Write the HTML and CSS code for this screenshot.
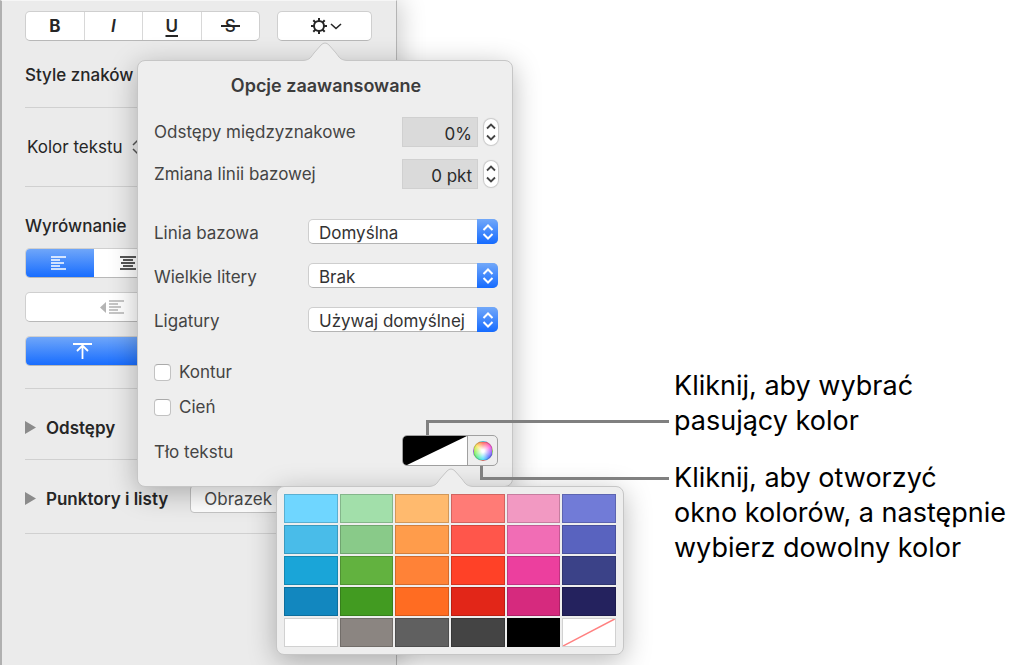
FILE: index.html
```html
<!DOCTYPE html>
<html lang="pl">
<head>
<meta charset="utf-8">
<title>Opcje zaawansowane</title>
<link rel="stylesheet" href="styles.css">
</head>
<body>
<main class="stage">
  <aside class="inspector">
    <div class="toolbar">
      <div class="segments">
        <button type="button" class="segment bold">B</button>
        <button type="button" class="segment italic">I</button>
        <button type="button" class="segment underline">U</button>
        <button type="button" class="segment strike" aria-label="S"><span>S</span></button>
      </div>
      <button type="button" class="gear" aria-label="Opcje zaawansowane">
        <svg width="30" height="18" viewBox="0 0 30 18" fill="none" stroke="#262626">
          <circle cx="9" cy="9" r="5" stroke-width="2"/>
          <path d="M9 1v3M9 14v3M1 9h3M14 9h3M3.3 3.3l2.2 2.2M12.5 12.5l2.2 2.2M3.3 14.7l2.2-2.2M12.5 5.5l2.2-2.2" stroke-width="2"/>
          <path d="M21 7l5 4.500 5-4.500" stroke-width="1.600"/>
        </svg>
      </button>
    </div>
    <section class="group styles"><h2>Style znaków</h2></section>
    <section class="group color">
      <span>Kolor tekstu</span>
      <svg width="10" height="16" viewBox="0 0 10 16" fill="none" stroke="#555" stroke-width="1.500"><path d="M1 6l4-4 4 4M1 10l4 4 4-4"/></svg>
    </section>
    <section class="group align">
      <h2>Wyrównanie</h2>
      <div class="segments wide">
        <button type="button" class="segment active" aria-label="Do lewej">
          <svg width="16" height="14" stroke="#fff" stroke-width="1.500"><path d="M0 1h15M0 4h9M0 7h13M0 10h9M0 13h15"/></svg>
        </button>
        <button type="button" class="segment" aria-label="Do środka">
          <svg width="16" height="14" stroke="#222" stroke-width="1.500"><path d="M0 1h16M3 4h10M1 7h14M3 10h10M0 13h16"/></svg>
        </button>
        <button type="button" class="segment" aria-label="Do prawej"></button>
        <button type="button" class="segment" aria-label="Wyjustuj"></button>
        <button type="button" class="segment" aria-label="Automatycznie"></button>
      </div>
      <div class="segments wide">
        <button type="button" class="segment" aria-label="Zmniejsz wcięcie">
          <svg width="24" height="15" fill="#b4b4b4" stroke="#b4b4b4" stroke-width="1.500"><path d="M6 2v11L0 7.500z" stroke="none"/><path d="M9 1h15M9 4h9M9 7h12M9 10h9M9 13h15"/></svg>
        </button>
        <button type="button" class="segment" aria-label="Zwiększ wcięcie"></button>
      </div>
      <div class="segments wide">
        <button type="button" class="segment active" aria-label="Do góry">
          <svg width="20" height="18" fill="none" stroke="#fff" stroke-width="1.800"><path d="M0 2h19M9.500 17V4M4 9l5.500-5.500L15 9"/></svg>
        </button>
        <button type="button" class="segment" aria-label="Do środka w pionie"></button>
        <button type="button" class="segment" aria-label="Do dołu"></button>
      </div>
    </section>
    <section class="group spacing">
      <svg class="disclosure" width="11" height="13" fill="#8b8b8b"><path d="M0 0l11 6.500L0 13z"/></svg>
      <h2>Odstępy</h2>
    </section>
    <section class="group bullets">
      <svg class="disclosure" width="11" height="13" fill="#8b8b8b"><path d="M0 0l11 6.500L0 13z"/></svg>
      <h2>Punktory i listy</h2>
      <button type="button" class="image-button">Obrazek</button>
    </section>
  </aside>

  <section class="popover advanced">
    <svg class="arrow" width="44" height="20" viewBox="0 0 44 20"><path class="fill" d="M0 20v-1.500C7 18 8 15 11 11L18 3Q22-1 26 3L33 11C36 15 37 18 44 18.500V20z"/><path class="edge" d="M0 18.500C7 18 8 15 11 11L18 3Q22-1 26 3L33 11C36 15 37 18 44 18.500"/></svg>
    <h1>Opcje zaawansowane</h1>
    <div class="numbers">
      <div class="row">
        <label for="tracking">Odstępy międzyznakowe</label>
        <input id="tracking" type="text" value="0%">
        <button type="button" class="stepper" aria-label="Zmień odstępy"><svg width="10" height="18" viewBox="0 0 10 18"><path d="M1 5.500l4-4 4 4M1 12.500l4 4 4-4"/></svg></button>
      </div>
      <div class="row">
        <label for="shift">Zmiana linii bazowej</label>
        <input id="shift" type="text" value="0 pkt">
        <button type="button" class="stepper" aria-label="Zmień linię"><svg width="10" height="18" viewBox="0 0 10 18"><path d="M1 5.500l4-4 4 4M1 12.500l4 4 4-4"/></svg></button>
      </div>
    </div>
    <div class="choices">
      <div class="row">
        <label for="baseline">Linia bazowa</label>
        <div class="picker"><select id="baseline"><option>Domyślna</option></select><span class="cap"><svg width="12" height="16" viewBox="0 0 12 16"><path d="M1.500 6L6 1.500 10.500 6M1.500 10L6 14.500 10.500 10"/></svg></span></div>
      </div>
      <div class="row">
        <label for="caps">Wielkie litery</label>
        <div class="picker"><select id="caps"><option>Brak</option></select><span class="cap"><svg width="12" height="16" viewBox="0 0 12 16"><path d="M1.500 6L6 1.500 10.500 6M1.500 10L6 14.500 10.500 10"/></svg></span></div>
      </div>
      <div class="row">
        <label for="ligatures">Ligatury</label>
        <div class="picker"><select id="ligatures"><option>Używaj domyślnej</option></select><span class="cap"><svg width="12" height="16" viewBox="0 0 12 16"><path d="M1.500 6L6 1.500 10.500 6M1.500 10L6 14.500 10.500 10"/></svg></span></div>
      </div>
    </div>
    <div class="checks">
      <label class="check"><input type="checkbox">Kontur</label>
      <label class="check"><input type="checkbox">Cień</label>
    </div>
    <div class="row background">
      <span>Tło tekstu</span>
      <div class="well">
        <button type="button" class="well-color" aria-label="Kolor tła"><svg width="100%" height="100%" viewBox="0 0 64 29" preserveAspectRatio="none"><path d="M0 0h64L4 29H0z"/></svg></button>
        <button type="button" class="well-wheel" aria-label="Okno kolorów"><span class="wheel"></span></button>
      </div>
    </div>
  </section>

  <section class="popover palette">
    <svg class="arrow" width="44" height="20" viewBox="0 0 44 20"><path class="fill" d="M0 20v-1.500C7 18 8 15 11 11L18 3Q22-1 26 3L33 11C36 15 37 18 44 18.500V20z"/><path class="edge" d="M0 18.500C7 18 8 15 11 11L18 3Q22-1 26 3L33 11C36 15 37 18 44 18.500"/></svg>
    <div class="swatches">
      <button type="button" class="swatch blue-1" aria-label="Niebieski 1"></button>
      <button type="button" class="swatch green-1" aria-label="Zielony 1"></button>
      <button type="button" class="swatch orange-1" aria-label="Pomarańczowy 1"></button>
      <button type="button" class="swatch red-1" aria-label="Czerwony 1"></button>
      <button type="button" class="swatch pink-1" aria-label="Różowy 1"></button>
      <button type="button" class="swatch violet-1" aria-label="Fioletowy 1"></button>
      <button type="button" class="swatch blue-2" aria-label="Niebieski 2"></button>
      <button type="button" class="swatch green-2" aria-label="Zielony 2"></button>
      <button type="button" class="swatch orange-2" aria-label="Pomarańczowy 2"></button>
      <button type="button" class="swatch red-2" aria-label="Czerwony 2"></button>
      <button type="button" class="swatch pink-2" aria-label="Różowy 2"></button>
      <button type="button" class="swatch violet-2" aria-label="Fioletowy 2"></button>
      <button type="button" class="swatch blue-3" aria-label="Niebieski 3"></button>
      <button type="button" class="swatch green-3" aria-label="Zielony 3"></button>
      <button type="button" class="swatch orange-3" aria-label="Pomarańczowy 3"></button>
      <button type="button" class="swatch red-3" aria-label="Czerwony 3"></button>
      <button type="button" class="swatch pink-3" aria-label="Różowy 3"></button>
      <button type="button" class="swatch violet-3" aria-label="Fioletowy 3"></button>
      <button type="button" class="swatch blue-4" aria-label="Niebieski 4"></button>
      <button type="button" class="swatch green-4" aria-label="Zielony 4"></button>
      <button type="button" class="swatch orange-4" aria-label="Pomarańczowy 4"></button>
      <button type="button" class="swatch red-4" aria-label="Czerwony 4"></button>
      <button type="button" class="swatch pink-4" aria-label="Różowy 4"></button>
      <button type="button" class="swatch violet-4" aria-label="Fioletowy 4"></button>
      <button type="button" class="swatch white" aria-label="Biały"></button>
      <button type="button" class="swatch gray-1" aria-label="Szary 1"></button>
      <button type="button" class="swatch gray-2" aria-label="Szary 2"></button>
      <button type="button" class="swatch gray-3" aria-label="Szary 3"></button>
      <button type="button" class="swatch black" aria-label="Czarny"></button>
      <button type="button" class="swatch white" aria-label="Brak koloru"><svg width="100%" height="100%" viewBox="0 0 52 27" preserveAspectRatio="none"><path d="M0 27L52 0" stroke="#ff8080" stroke-width="1.500"/></svg></button>
    </div>
  </section>

  <svg class="leaders" width="670" height="482" fill="none" stroke="#808080" stroke-width="3"><path d="M427.500 435V421.500H669M481.500 466V478.500H669"/></svg>

  <div class="callouts">
    <p>Kliknij, aby wybrać<br>pasujący kolor</p>
    <p>Kliknij, aby otworzyć<br>okno kolorów, a następnie<br>wybierz dowolny kolor</p>
  </div>
</main>
</body>
</html>
```
FILE: styles.css
```css
* { box-sizing: border-box; }

body {
  margin: 0;
  background: #fff;
  color: #262626;
  font: 17px/24px Inter, "Liberation Sans", sans-serif;
}

h1, h2, p { margin: 0; }
h1 { font-size: 18px; line-height: 24px; font-weight: 600; }
h2 { font-size: 17px; line-height: 24px; font-weight: 500; }

button, input, select { font: inherit; color: inherit; margin: 0; padding: 0; }
button { border: 0; background: none; }
svg { display: block; flex: none; }

.stage {
  position: relative;
  display: flex;
  min-height: 100vh;
  overflow: hidden;
}

/* Inspector */
.inspector {
  flex: none;
  width: 397px;
  padding: 10px 24px 0 23px;
  background: #ebebeb;
  border-left: 2px solid #b0b0b0;
  border-right: 1px solid #b4b4b4;
  border-top: 1px solid #f6f6f6;
  box-shadow: 4px 0 24px rgba(0, 0, 0, .2);
}

.toolbar { display: flex; gap: 17px; }
.toolbar .segments { flex: 1; }

.segments {
  display: flex;
  height: 30px;
  overflow: hidden;
  background: #fff;
  border: 1px solid #cfcfcf;
  border-bottom-color: #b8b8b8;
  border-radius: 5px;
}

.segment {
  flex: 1;
  display: flex;
  align-items: center;
  justify-content: center;
  line-height: 20px;
}
.segment + .segment { border-left: 1px solid #d8d8d8; }
.bold { font-weight: 700; }
.italic { font-weight: 600; font-style: italic; }
.underline { font-weight: 600; text-decoration: underline; text-decoration-thickness: 2px; text-underline-offset: 3px; }
.strike { font-weight: 500; }
.strike span {
  padding: 0 4px;
  background: linear-gradient(#262626, #262626) center / 100% 2px no-repeat;
}

.gear {
  display: flex;
  align-items: center;
  justify-content: center;
  width: 95px;
  height: 30px;
  background: #fff;
  border: 1px solid #cfcfcf;
  border-bottom-color: #b8b8b8;
  border-radius: 5px;
}
.gear svg { overflow: visible; }

.group {
  display: flex;
  align-items: center;
  border-bottom: 1px solid #d0d0d0;
}
.styles { height: 67px; padding-top: 2px; }
.color { height: 79px; padding-left: 2px; gap: 9px; }
.align {
  flex-direction: column;
  align-items: stretch;
  gap: 14px;
  padding: 27px 0 22px;
}
.align h2 { margin-bottom: -4px; }
.spacing { height: 71px; padding-top: 7px; }
.bullets { height: 74px; padding-top: 4px; }
.spacing, .bullets { gap: 10px; }
.spacing h2, .bullets h2 { font-weight: 600; }

.wide .active {
  height: 30px;
  margin: -1px 0 -1px -1px;
  background: linear-gradient(#72a8f9, #156bff);
}
.wide .active + .segment { border-left: 0; }

.image-button {
  height: 28px;
  flex: 1;
  margin-left: 12px;
  padding-left: 13px;
  text-align: left;
  color: #4a4a4a;
  background: #fff;
  border: 1px solid #c4c4c4;
  border-radius: 4px;
}

/* Popovers float over the inspector */
.popover {
  position: absolute;
  background: #eeeeee;
  border: 1px solid #c6c6c6;
  border-radius: 8px;
  box-shadow: 0 6px 28px rgba(0, 0, 0, .28);
}
.arrow { position: absolute; bottom: 100%; margin-bottom: -1px; }
.arrow .fill { fill: #eeeeee; }
.arrow .edge { fill: none; stroke: #c6c6c6; }

.advanced {
  left: 137px;
  top: 60px;
  width: 376px;
  padding: 13px 14px 20px 16px;
  color: #444;
}
.advanced .arrow { left: 165px; }
.advanced h1 { text-align: center; color: #3c3c3c; }

.row { display: flex; align-items: center; justify-content: space-between; }

.numbers { display: grid; gap: 12px; margin-top: 19px; }
.numbers .row { height: 30px; gap: 6px; }
.numbers label { flex: 1; }
.numbers input {
  width: 76px;
  height: 30px;
  padding: 3px 5px 0;
  text-align: right;
  color: #2b2b2b;
  background: #dadada;
  border: 1px solid #d0d0d0;
}
.stepper {
  display: flex;
  align-items: center;
  justify-content: center;
  width: 14px;
  height: 26px;
  background: #fff;
  border-radius: 7px;
  box-shadow: 0 0 1px 1px rgba(0, 0, 0, .16);
}
.stepper path { fill: none; stroke: #444; stroke-width: 1.8; }

.choices { display: grid; gap: 19px; margin-top: 30px; }
.choices .row { height: 25px; }
.choices label { padding-top: 2px; }
.picker { position: relative; width: 190px; height: 25px; }
.picker select {
  width: 100%;
  height: 25px;
  padding: 1px 22px 0 10px;
  appearance: none;
  color: #333;
  background: #fff;
  border: 1px solid #cecece;
  border-bottom-color: #b4b4b4;
  border-radius: 5px;
}
.cap {
  position: absolute;
  top: 0;
  right: 0;
  display: flex;
  align-items: center;
  justify-content: center;
  width: 21px;
  height: 25px;
  background: linear-gradient(#72a8f9, #156bff);
  border-radius: 0 5px 5px 0;
  pointer-events: none;
}
.cap path { fill: none; stroke: #fff; stroke-width: 2; }

.checks { display: grid; gap: 11px; margin-top: 28px; }
.check { display: flex; align-items: center; gap: 8px; }
.check input {
  width: 17px;
  height: 17px;
  appearance: none;
  background: #fff;
  border: 1px solid #c2c2c2;
  border-top-color: #aaa;
  border-radius: 4px;
}

.background { margin-top: 16px; }
.background > span { padding-top: 2px; }
.well {
  display: flex;
  width: 96px;
  height: 31px;
  overflow: hidden;
  border: 1px solid #a0a0a0;
  border-radius: 5px;
}
.well-color { flex: 1; background: #fff; border-right: 1px solid #a0a0a0; }
.well-wheel { display: flex; align-items: center; justify-content: center; width: 29px; }
.wheel {
  width: 20px;
  height: 20px;
  border-radius: 50%;
  border: 1px solid rgba(80, 80, 80, .3);
  background:
    radial-gradient(#fff 10%, rgba(255, 255, 255, 0) 75%),
    conic-gradient(#ff5a4f, #ff4fd8 60deg, #8a5bff 100deg, #4a6cff 135deg, #3fdcff 180deg, #52f08a 225deg, #8ef04c 265deg, #ffe14c 310deg, #ff5a4f);
}

.palette {
  left: 276px;
  top: 486px;
  width: 348px;
  padding: 7px;
}
.palette .arrow { left: 152px; }
.swatches { display: grid; grid-template-columns: repeat(6, 1fr); gap: 2px; }
.swatch { height: 29px; border: 1px solid rgba(0, 0, 0, .18); }

.blue-1 { background: #6fd6ff; }
.blue-2 { background: #49bce9; }
.blue-3 { background: #1aa5d8; }
.blue-4 { background: #1287bf; }
.green-1 { background: #a2dfaa; }
.green-2 { background: #89ca89; }
.green-3 { background: #62b23f; }
.green-4 { background: #429b21; }
.orange-1 { background: #ffba6e; }
.orange-2 { background: #ff9c4b; }
.orange-3 { background: #ff8237; }
.orange-4 { background: #ff6c22; }
.red-1 { background: #ff7b76; }
.red-2 { background: #ff564b; }
.red-3 { background: #ff4127; }
.red-4 { background: #e22618; }
.pink-1 { background: #f299c2; }
.pink-2 { background: #f16db5; }
.pink-3 { background: #ec3f9e; }
.pink-4 { background: #d62a7e; }
.violet-1 { background: #717bd7; }
.violet-2 { background: #5963bf; }
.violet-3 { background: #3b4288; }
.violet-4 { background: #24225e; }
.white { background: #fff; }
.gray-1 { background: #8b8581; }
.gray-2 { background: #606060; }
.gray-3 { background: #444; }
.black { background: #000; }

/* Annotations */
.leaders { position: absolute; left: 0; top: 0; pointer-events: none; }

.callouts {
  flex: 1;
  display: flex;
  flex-direction: column;
  gap: 22px;
  padding: 368px 0 0 277px;
  color: #000;
  font-size: 27px;
  line-height: 35px;
  white-space: nowrap;
}
```
